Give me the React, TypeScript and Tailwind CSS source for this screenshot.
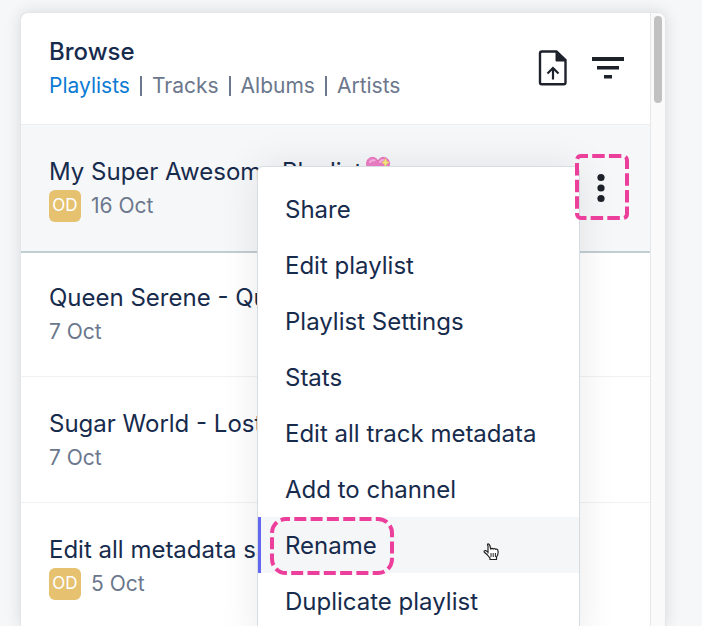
import type { ReactNode } from "react";

const tabs = ["Playlists", "Tracks", "Albums", "Artists"];

const playlists = [
  { title: "My Super Awesome Playlist", date: "16 Oct", owner: "OD", active: true },
  { title: "Queen Serene - Queen Serene", date: "7 Oct", owner: "", active: false },
  { title: "Sugar World - Lost & Found", date: "7 Oct", owner: "", active: false },
  { title: "Edit all metadata sample", date: "5 Oct", owner: "OD", active: false },
];

const actions = [
  "Share",
  "Edit playlist",
  "Playlist Settings",
  "Stats",
  "Edit all track metadata",
  "Add to channel",
  "Rename",
  "Duplicate playlist",
];

function UploadIcon() {
  return (
    <svg width="30" height="36" viewBox="0 0 30 36" fill="none" stroke="#1d2129" aria-hidden="true">
      <path d="M4 1.5H18.5L27.5 10V32.5Q27.5 34.2 25.8 34.2H3.7Q2 34.2 2 32.5V3.2Q2 1.5 4 1.5Z" strokeWidth="2.4" />
      <path d="M18 1.5V11H27.5Z" fill="#1d2129" strokeWidth="1" />
      <path d="M15 29.5V18.5M9.5 23.5L15 18L20.5 23.5" strokeWidth="2.2" />
    </svg>
  );
}

function FilterIcon() {
  return (
    <svg width="32" height="22" viewBox="0 0 32 22" fill="#1d2129" aria-hidden="true">
      <path d="M0 0H32V4H0ZM5 9H27V12.500H5ZM12 18H20V21.500H12Z" />
    </svg>
  );
}

function SparklingHeart() {
  return (
    <svg width="24" height="24" viewBox="0 0 24 24" role="img" aria-label="Sparkling heart">
      <path
        d="M12 5C10 .5 4 .3 1.600 4C-.5 8 1 12 4 15.500C7 19 10 21 12 22.500C14 21 17 19 20 15.500C23 12 24.500 8 22.400 4C20 .3 14 .5 12 5Z"
        fill="#f07fc8"
        stroke="#e56db8"
      />
      <path d="M4 6Q5.500 3.500 8.500 4.500M14 6Q15 4 17 4" fill="none" stroke="#fbb8e3" strokeWidth="2" strokeLinecap="round" />
      <path d="M19.500 2.500L20.500 5.500L23 6.500L20.500 7.700L19.500 11L18.300 7.700L16 6.500L18.300 5.500Z" fill="#fbf08a" stroke="#f3dd6d" />
    </svg>
  );
}

function HandCursor() {
  return (
    <svg width="16" height="18" viewBox="0 0 16 18" aria-hidden="true">
      <path
        d="M5 10V3Q4 1 5 .8Q6.400 .6 7 3L7.700 6.200Q9 4.700 10.200 6Q11.500 4.900 12.500 6.300Q14.500 5.500 15 8Q15.500 12 13.500 14V16.500H7V15Q5.500 13.500 4.500 12L1.200 9Q.8 7.300 2.500 7.500L5 9Z"
        fill="white"
        stroke="#222"
        strokeWidth="1.2"
        strokeLinejoin="round"
      />
      <path d="M8 10V14M10.200 10V14M12.400 10V14" stroke="#222" />
    </svg>
  );
}

function PlaylistRow({ item, children }: { item: (typeof playlists)[number]; children?: ReactNode }) {
  return (
    <li
      className={
        item.active
          ? "relative z-10 flex h-[126px] items-start bg-[#f6f7f9] px-7 pt-[31px] shadow-[0_2px_0_#c2cdd1]"
          : "flex h-[126px] items-start border-b border-[#eff1f3] px-7 pt-[31px]"
      }
    >
      <div className="min-w-0 flex-1">
        <div className="flex items-start gap-1">
          <h2 className="truncate text-2xl leading-8 text-[#172b4d]">{item.title}</h2>
          {item.active && <SparklingHeart />}
        </div>
        <div className="flex h-9 items-center gap-2.5">
          {item.owner && (
            <span className="flex size-8 items-center justify-center rounded-md bg-[#e5c170] text-[17px] text-white">
              {item.owner}
            </span>
          )}
          <span className="text-[21px] text-[#6b778c]">{item.date}</span>
        </div>
      </div>
      {children}
    </li>
  );
}

function ActionMenu() {
  return (
    <div
      role="menu"
      className="absolute top-[41px] right-[70px] w-[323px] rounded-md border border-[#d5dce2] bg-white py-3.5 shadow-[0_0_40px_rgba(0,0,0,0.09)]"
    >
      {actions.map((action) => (
        <button
          key={action}
          role="menuitem"
          type="button"
          className={
            action === "Rename"
              ? "relative flex h-14 w-full items-center bg-[#f5f6f8] pt-0.5 pl-[27px] text-2xl text-[#172b4d] shadow-[inset_3px_0_0_#6366f1]"
              : "flex h-14 w-full items-center pt-0.5 pl-[27px] text-2xl text-[#172b4d]"
          }
        >
          {action}
          {action === "Rename" && (
            <>
              <svg className="absolute top-0 left-3" width="124" height="58" fill="none" aria-hidden="true">
                <rect x="2" y="2" width="120" height="54" rx="14" stroke="#ec3f9c" strokeWidth="4" strokeDasharray="12 4.300" strokeDashoffset="8" />
              </svg>
              <span className="absolute top-[26px] right-20">
                <HandCursor />
              </span>
            </>
          )}
        </button>
      ))}
    </div>
  );
}

export default function App() {
  return (
    <div className="h-screen overflow-hidden bg-[#f6f7f9] pt-3 pr-9 pl-5 font-['Inter',sans-serif]">
      <main className="flex h-full overflow-hidden rounded-t-lg border border-b-0 border-[#e4e5e7] bg-white shadow-[0_0_16px_rgba(0,0,0,0.12)]">
        <div className="min-w-0 flex-1">
          <header className="flex h-28 items-center justify-between border-b border-[#eceef1] pr-6.5 pb-0.5 pl-7">
            <div className="pt-0.5">
              <h1 className="text-2xl leading-8 font-medium text-[#172b4d]">Browse</h1>
              <nav className="mt-0.5 flex items-center text-[21px] leading-8">
                {tabs.map((tab, i) => (
                  <a
                    key={tab}
                    href={"#" + tab.toLowerCase()}
                    className={i === 0 ? "text-[#0c7bd4]" : "flex items-center text-[#6b778c]"}
                  >
                    {i > 0 && <span className="mx-2.5 h-5 w-0.5 bg-[#6b778c]" />}
                    {tab}
                  </a>
                ))}
              </nav>
            </div>
            <div className="flex items-center gap-6">
              <button type="button" aria-label="Upload">
                <UploadIcon />
              </button>
              <button type="button" aria-label="Filter">
                <FilterIcon />
              </button>
            </div>
          </header>
          <ul>
            {playlists.map((item) => (
              <PlaylistRow key={item.title} item={item}>
                {item.active && (
                  <>
                    <ActionMenu />
                    <button
                      type="button"
                      aria-label="More actions"
                      className="relative -mt-0.5 -mr-[7px] flex h-[66px] w-[54px] items-center justify-center"
                    >
                      <svg width="54" height="66" fill="none" aria-hidden="true">
                        <rect x="2" y="2" width="50" height="62" rx="4" stroke="#ec3f9c" strokeWidth="4" strokeDasharray="12.500 4.200" strokeDashoffset="5.500" />
                        <g fill="#1d2129">
                          <circle cx="26" cy="23.500" r="3.600" />
                          <circle cx="26" cy="34" r="3.600" />
                          <circle cx="26" cy="44.500" r="3.600" />
                        </g>
                      </svg>
                    </button>
                  </>
                )}
              </PlaylistRow>
            ))}
          </ul>
        </div>
        <div className="w-[15px] border-l border-[#e6e7e9] bg-[#fafafa] px-[3px] pt-[3px]">
          <div className="h-[87px] w-2 rounded-full bg-[#c1c1c1]" />
        </div>
      </main>
    </div>
  );
}
